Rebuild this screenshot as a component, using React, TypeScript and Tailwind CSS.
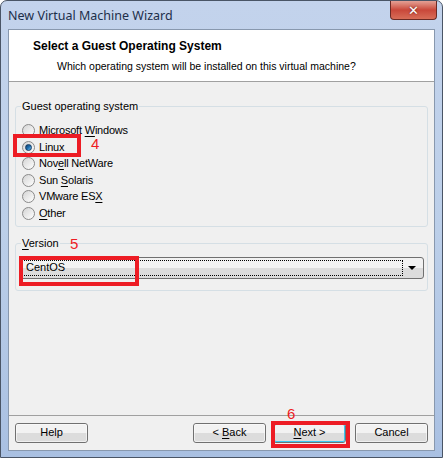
import React from 'react';

const ui = { fontFamily: '"Liberation Sans", Arial, sans-serif' };

function U({ children }: { children: React.ReactNode }) {
  return <span className="underline underline-offset-2">{children}</span>;
}

function Radio({ checked, label }: { checked?: boolean; label: React.ReactNode }) {
  return (
    <div className="flex items-center h-[16.5px] gap-[4px]">
      <span className="w-[13px] h-[13px] rounded-full border border-[#8a8a8a] bg-gradient-to-br from-[#d4d4d4] to-[#ffffff] flex items-center justify-center">
        {checked && (
          <span className="w-[7px] h-[7px] rounded-full bg-gradient-to-br from-[#0f3f6e] via-[#1f6fb0] to-[#6cc0f0] border border-[#123a62]" />
        )}
      </span>
      <span className="text-[11px] tracking-[-0.2px] text-black leading-none">{label}</span>
    </div>
  );
}

function Button({ children, isDefault }: { children: React.ReactNode; isDefault?: boolean }) {
  return (
    <div className="w-[73px] h-[20px] rounded-[3px] border border-[#707070] bg-gradient-to-b from-[#f2f2f2] from-50% to-[#dcdcdc] to-50% flex items-center justify-center">
      <div
        className={`w-full h-full rounded-[2px] flex items-center justify-center text-[11px] text-black ${
          isDefault ? 'border border-[#3cc7f0]' : 'border border-[#fcfcfc]/60'
        }`}
      >
        {children}
      </div>
    </div>
  );
}

function Mark({ n, className }: { n: string; className: string }) {
  return (
    <span className={`absolute text-[15px] leading-none text-[#ee1c24] ${className}`} style={ui}>
      {n}
    </span>
  );
}

export default function App() {
  return (
    <div className="relative w-[443px] h-[458px] overflow-hidden bg-white" style={ui}>
      <div className="w-full h-full rounded-t-[7px] border border-[#4a5566] bg-gradient-to-b from-[#c3d3ec] via-[#bccfe9] to-[#a9c0e2] flex flex-col">
        {/* title bar */}
        <div className="h-[28px] flex items-start justify-between">
          <span className="pl-[7px] pt-[6px] text-[12.5px] text-[#1d2f4a]" style={{ fontFamily: '"Noto Sans", "Liberation Sans", sans-serif' }}>
            New Virtual Machine Wizard
          </span>
          <div className="mr-[5px] w-[47px] h-[19px] rounded-b-[4px] border border-t-0 border-[#6b2a24] bg-gradient-to-b from-[#e3a095] via-[#c9473a] to-[#d86d58] flex items-center justify-center">
            <span className="text-white font-bold text-[13px] leading-none" style={{ fontFamily: '"DejaVu Sans", sans-serif', textShadow: '0 0 2px #5a1a14' }}>
              ✕
            </span>
          </div>
        </div>

        {/* client */}
        <div className="mx-[7px] h-[422px] border border-[#8898ae] bg-[#f0f0f0] flex flex-col">
          <div className="h-[52px] bg-white border-b border-[#a0a0a0] pt-[7px]">
            <div className="pl-[24px] text-[12px] font-bold text-black">Select a Guest Operating System</div>
            <div className="pl-[48px] pt-[4px] text-[10.5px] text-black">
              Which operating system will be installed on this virtual machine?
            </div>
          </div>

          <fieldset className="mx-[6px] mt-[16px] h-[129px] border border-[#d5dfe5] rounded-[3px] px-[6px]">
            <legend className="text-[11px] px-[1px] ml-[-1px] text-black">Guest operating system</legend>
            <div className="pt-[8px] flex flex-col">
              <Radio label={<>Microsoft <U>W</U>indows</>} />
              <Radio checked label="Linux" />
              <Radio label={<>Nov<U>e</U>ll NetWare</>} />
              <Radio label={<>Sun <U>S</U>olaris</>} />
              <Radio label={<>VMware ES<U>X</U></>} />
              <Radio label={<><U>O</U>ther</>} />
            </div>
          </fieldset>

          <fieldset className="mx-[6px] mt-[8px] h-[56px] border border-[#d5dfe5] rounded-[3px] px-[3px]">
            <legend className="text-[11px] px-[1px] ml-[2px] text-black">
              <U>V</U>ersion
            </legend>
            <div className="mt-[5px] h-[22px] rounded-[3px] border border-[#707070] bg-gradient-to-b from-[#f2f2f2] from-50% to-[#dcdcdc] to-50% flex items-center px-[2px]">
              <div className="flex-1 h-[16px] border border-dotted border-black flex items-center pl-[3px] text-[11px] text-black">
                CentOS
              </div>
              <div className="w-[18px] flex justify-center">
                <span className="w-0 h-0 border-l-[4px] border-r-[4px] border-t-[4px] border-l-transparent border-r-transparent border-t-black" />
              </div>
            </div>
          </fieldset>

          <div className="flex-1" />
          <div className="border-t border-[#a0a0a0] h-[35px] flex items-center px-[6px] pb-[1px]">
            <Button>Help</Button>
            <div className="flex-1" />
            <div className="flex gap-[7px] mr-[9px]">
              <Button>
                &lt;&nbsp;<U>B</U>ack
              </Button>
              <Button isDefault>
                <U>N</U>ext &gt;
              </Button>
            </div>
            <Button>Cancel</Button>
          </div>
        </div>
      </div>

      {/* annotations */}
      <div className="absolute left-[13px] top-[134px] w-[68px] h-[23px] border-[4px] border-[#ed1c24]" />
      <Mark n="4" className="left-[91px] top-[136px]" />
      <div className="absolute left-[19px] top-[256px] w-[120px] h-[30px] border-[4px] border-[#ed1c24]" />
      <Mark n="5" className="left-[70px] top-[236px]" />
      <div className="absolute left-[271px] top-[421px] w-[79px] h-[27px] border-[4px] border-[#ed1c24]" />
      <Mark n="6" className="left-[287px] top-[406px]" />
    </div>
  );
}
